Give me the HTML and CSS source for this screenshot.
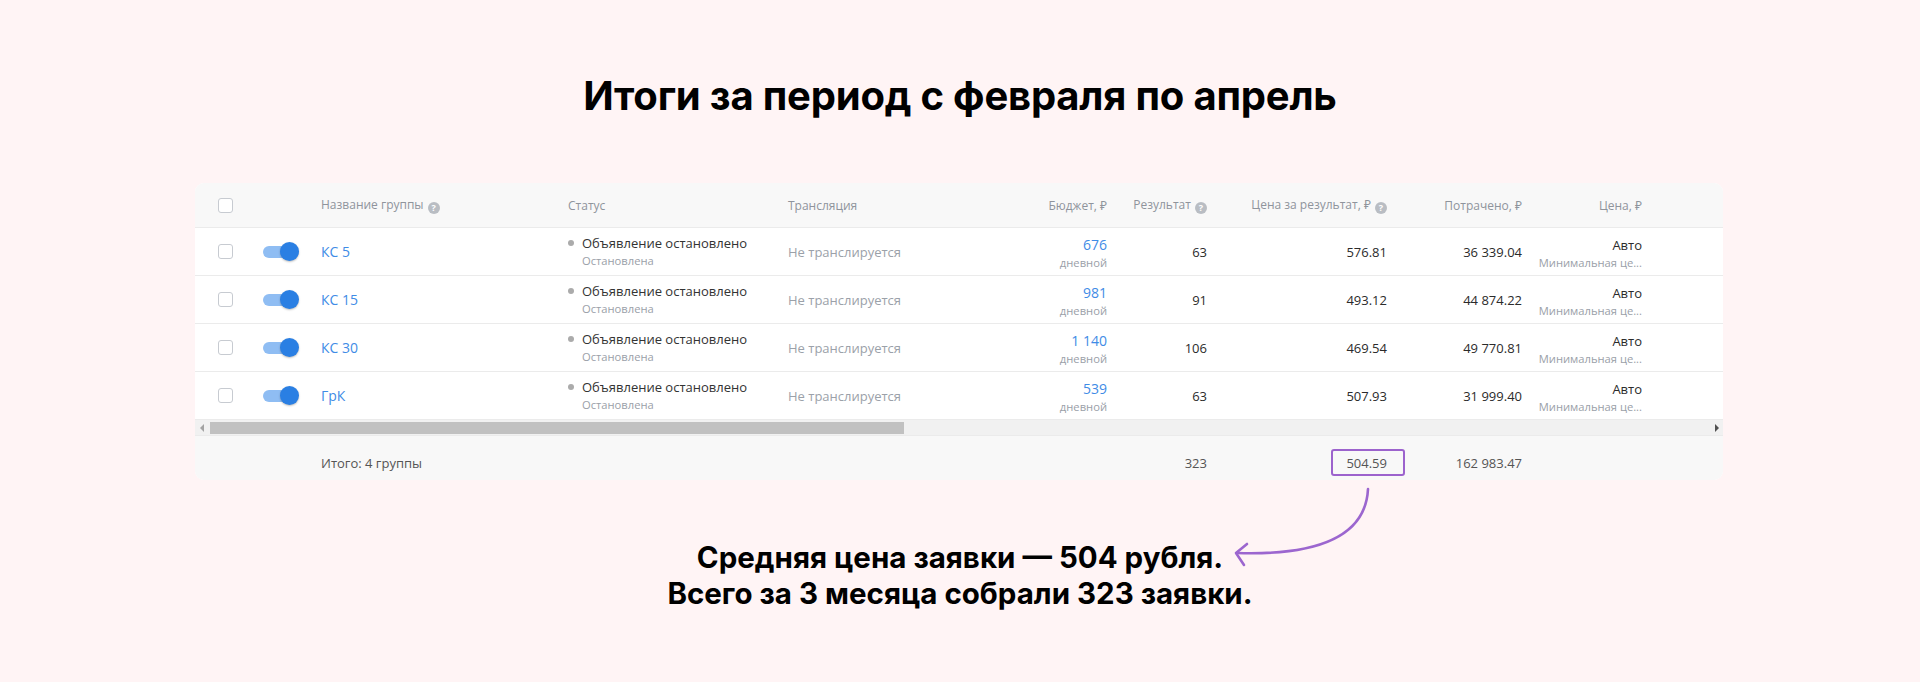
FILE: index.html
```html
<!DOCTYPE html>
<html lang="ru">
<head>
<meta charset="utf-8">
<title>Итоги</title>
<link rel="stylesheet" href="styles.css">
</head>
<body>
<main class="page">
  <h1 class="title">Итоги за период с февраля по апрель</h1>

  <section class="card">
    <div class="row head">
      <div class="c-check"><span class="checkbox"></span></div>
      <div></div>
      <div class="c-name">Название группы <span class="help">?</span></div>
      <div>Статус</div>
      <div>Трансляция</div>
      <div class="r">Бюджет, ₽</div>
      <div class="r">Результат <span class="help">?</span></div>
      <div class="r">Цена за результат, ₽ <span class="help">?</span></div>
      <div class="r">Потрачено, ₽</div>
      <div class="r">Цена, ₽</div>
      <div></div>
    </div>

    <div class="row">
      <div class="c-check"><span class="checkbox"></span></div>
      <div><span class="toggle"></span></div>
      <div class="link">КС 5</div>
      <div class="status"><div class="st-main"><span class="dot"></span>Объявление остановлено</div><div class="st-sub">Остановлена</div></div>
      <div class="muted">Не транслируется</div>
      <div class="r two"><div class="link">676</div><div class="sub">дневной</div></div>
      <div class="r val">63</div>
      <div class="r val">576.81</div>
      <div class="r val">36 339.04</div>
      <div class="r two"><div class="val">Авто</div><div class="sub">Минимальная це...</div></div>
      <div></div>
    </div>

    <div class="row">
      <div class="c-check"><span class="checkbox"></span></div>
      <div><span class="toggle"></span></div>
      <div class="link">КС 15</div>
      <div class="status"><div class="st-main"><span class="dot"></span>Объявление остановлено</div><div class="st-sub">Остановлена</div></div>
      <div class="muted">Не транслируется</div>
      <div class="r two"><div class="link">981</div><div class="sub">дневной</div></div>
      <div class="r val">91</div>
      <div class="r val">493.12</div>
      <div class="r val">44 874.22</div>
      <div class="r two"><div class="val">Авто</div><div class="sub">Минимальная це...</div></div>
      <div></div>
    </div>

    <div class="row">
      <div class="c-check"><span class="checkbox"></span></div>
      <div><span class="toggle"></span></div>
      <div class="link">КС 30</div>
      <div class="status"><div class="st-main"><span class="dot"></span>Объявление остановлено</div><div class="st-sub">Остановлена</div></div>
      <div class="muted">Не транслируется</div>
      <div class="r two"><div class="link">1 140</div><div class="sub">дневной</div></div>
      <div class="r val">106</div>
      <div class="r val">469.54</div>
      <div class="r val">49 770.81</div>
      <div class="r two"><div class="val">Авто</div><div class="sub">Минимальная це...</div></div>
      <div></div>
    </div>

    <div class="row">
      <div class="c-check"><span class="checkbox"></span></div>
      <div><span class="toggle"></span></div>
      <div class="link">ГрК</div>
      <div class="status"><div class="st-main"><span class="dot"></span>Объявление остановлено</div><div class="st-sub">Остановлена</div></div>
      <div class="muted">Не транслируется</div>
      <div class="r two"><div class="link">539</div><div class="sub">дневной</div></div>
      <div class="r val">63</div>
      <div class="r val">507.93</div>
      <div class="r val">31 999.40</div>
      <div class="r two"><div class="val">Авто</div><div class="sub">Минимальная це...</div></div>
      <div></div>
    </div>

    <div class="scrollbar">
      <span class="arr arr-left"></span>
      <span class="thumb"></span>
      <span class="arr arr-right"></span>
    </div>

    <div class="row foot">
      <div></div>
      <div></div>
      <div>Итого: 4 группы</div>
      <div></div>
      <div></div>
      <div></div>
      <div class="r">323</div>
      <div class="r"><span class="hl">504.59</span></div>
      <div class="r">162 983.47</div>
      <div></div>
      <div></div>
    </div>
  </section>

  <p class="note">Средняя цена заявки — 504 рубля.<br>Всего за 3 месяца собрали 323 заявки.</p>

  <svg class="arrow" viewBox="0 0 1920 682" width="1920" height="682" aria-hidden="true">
    <path d="M1368 489 C1366 530 1330 556 1237 553" fill="none" stroke="#9c66cf" stroke-width="2.6" stroke-linecap="round"/>
    <path d="M1247 544 L1236 553 L1244 565" fill="none" stroke="#9c66cf" stroke-width="2.6" stroke-linecap="round" stroke-linejoin="round"/>
  </svg>
</main>
</body>
</html>
```

FILE: styles.css
```css
html, body {
  margin: 0;
  padding: 0;
}

body {
  background: #fff4f5;
  width: 1920px;
  height: 682px;
  overflow: hidden;
}

.page {
  position: relative;
  width: 1920px;
  height: 682px;
  padding-top: 72px;
  box-sizing: border-box;
}

.title {
  margin: 0;
  font-family: Inter, "Noto Sans", sans-serif;
  font-weight: 700;
  font-size: 40px;
  line-height: 48px;
  text-align: center;
  color: #000;
  letter-spacing: -0.2px;
}

.card {
  margin: 63px 0 0 195px;
  width: 1528px;
  background: #fff;
  border-radius: 9px;
  overflow: hidden;
  font-family: "Open Sans", "Noto Sans", sans-serif;
  font-size: 13px;
  color: #333;
}

.row {
  display: grid;
  grid-template-columns: 68px 58px 247px 220px 239px 80px 100px 180px 135px 120px 1fr;
  align-items: center;
  height: 48px;
  box-sizing: border-box;
  border-bottom: 1px solid #ebebeb;
}

.head {
  height: 45px;
  background: #f8f8f8;
  color: #8f949c;
  font-size: 12px;
}

.r {
  text-align: right;
}

.c-check {
  padding-left: 23px;
  display: flex;
  align-items: center;
}

.checkbox {
  display: block;
  width: 15px;
  height: 15px;
  box-sizing: border-box;
  border: 1.5px solid #c7cbd1;
  border-radius: 3px;
  background: #fff;
}

.help {
  display: inline-flex;
  align-items: center;
  justify-content: center;
  width: 12px;
  height: 12px;
  border-radius: 50%;
  background: #b9bdc3;
  color: #fff;
  font-size: 9px;
  font-weight: 700;
  line-height: 1;
  vertical-align: -2px;
  margin-left: 1px;
}

.toggle {
  position: relative;
  display: block;
  width: 36px;
  height: 19px;
}

.toggle::before {
  content: "";
  position: absolute;
  left: 0;
  top: 4px;
  width: 30px;
  height: 12px;
  border-radius: 6px;
  background: #8fbdf3;
}

.toggle::after {
  content: "";
  position: absolute;
  right: 0;
  top: 0;
  width: 19px;
  height: 19px;
  border-radius: 50%;
  background: #2a7fe3;
  box-shadow: 0 1px 2px rgba(0, 0, 0, 0.25);
}

.link {
  color: #3f8ce6;
  font-size: 14px;
}

.status {
  line-height: 18px;
}

.st-main {
  display: flex;
  align-items: center;
  color: #333;
}

.dot {
  width: 6px;
  height: 6px;
  border-radius: 50%;
  background: #ababab;
  margin-right: 8px;
}

.st-sub {
  padding-left: 14px;
  font-size: 11.2px;
  color: #9aa0a8;
}

.muted {
  color: #9ba1a9;
}

.two {
  line-height: 18px;
  padding-top: 4px;
}

.two .link {
  font-size: 14px;
}

.sub {
  font-size: 11.2px;
  color: #9aa0a8;
}

.val {
  color: #2b2b2b;
}

.scrollbar {
  display: flex;
  align-items: center;
  height: 16px;
  padding: 0 4px 0 5px;
  background: #f1f1f1;
  border-bottom: 1px solid #ebebeb;
  box-sizing: border-box;
}

.arr {
  width: 0;
  height: 0;
  border-top: 4px solid transparent;
  border-bottom: 4px solid transparent;
}

.arr-left {
  border-right: 4px solid #a3a3a3;
}

.arr-right {
  margin-left: auto;
  border-left: 4px solid #505050;
}

.thumb {
  margin-left: 6px;
  width: 694px;
  height: 12px;
  background: #c1c1c1;
}

.foot {
  height: 44px;
  padding-top: 10px;
  border-bottom: 0;
  background: #f8f8f8;
  color: #555;
  line-height: 18px;
}

.hl {
  position: relative;
  display: inline-block;
}

.hl::after {
  content: "";
  position: absolute;
  left: -15px;
  right: -18px;
  top: -5px;
  bottom: -4px;
  border: 2.5px solid #9c63cd;
  border-radius: 3px;
}

.note {
  margin: 59px 0 0;
  font-family: Inter, "Noto Sans", sans-serif;
  font-weight: 700;
  font-size: 29.5px;
  line-height: 36px;
  text-align: center;
  color: #000;
}

.arrow {
  position: absolute;
  left: 0;
  top: 0;
  pointer-events: none;
}
```
